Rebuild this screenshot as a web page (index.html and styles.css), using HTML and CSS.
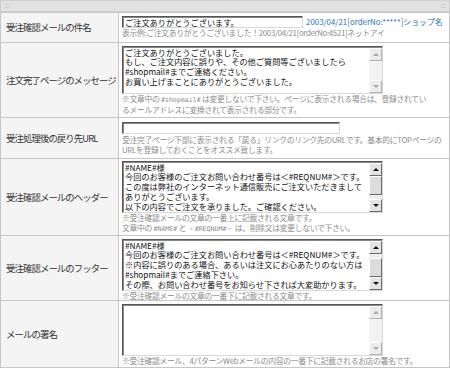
FILE: index.html
```html
<!DOCTYPE html>
<html lang="ja">
<head>
  <meta charset="UTF-8" />
  <title>受注メール設定</title>
  <link rel="stylesheet" href="styles.css">
</head>
<body>
  <div class="titlebar"><span>::</span><span>::</span></div>

  <table class="form">
    <tr class="r1">
      <th>受注確認メールの件名</th>
      <td>
        <div class="line">
          <input class="field subject" type="text" value="ご注文ありがとうございます。">
          <span class="sample">2003/04/21[orderNo:*****]ショップ名</span>
        </div>
        <p class="note">表示例:ご注文ありがとうございました！2003/04/21[orderNo:4521]ネットアイ</p>
      </td>
    </tr>
    <tr class="r2">
      <th>注文完了ページのメッセージ</th>
      <td>
        <div class="box">
          <textarea class="h4">ご注文ありがとうございました。
もし、ご注文内容に誤りや、その他ご質問等ございましたら
#shopmail#までご連絡ください。
お買い上げまことにありがとうございました。</textarea>
          <div class="scroll off"><span class="btn up"></span><span class="track"></span><span class="btn down"></span></div>
        </div>
        <p class="note">※文章中の <span class="code">#shopmail#</span> は変更しないで下さい。ページに表示される場合は、登録されてい<br>るメールアドレスに変換されて表示される部分です。</p>
      </td>
    </tr>
    <tr class="r3">
      <th>受注処理後の戻り先URL</th>
      <td>
        <div class="line">
          <input class="field url" type="text" value="">
        </div>
        <p class="note">受注完了ページ下部に表示される「戻る」リンクのリンク先のURLです。基本的にTOPページの<br>URLを登録しておくことをオススメ致します。</p>
      </td>
    </tr>
    <tr class="r4">
      <th>受注確認メールのヘッダー</th>
      <td>
        <div class="box">
          <textarea class="h5">#NAME#様
今回のお客様のご注文お問い合わせ番号は＜#REQNUM#＞です。
この度は弊社のインターネット通信販売にご注文いただきまして
ありがとうございます。
以下の内容でご注文を承りました。ご確認ください。</textarea>
          <div class="scroll"><span class="btn up"></span><span class="track"><span class="thumb"></span></span><span class="btn down"></span></div>
        </div>
        <p class="note">※受注確認メールの文章の一番上に記載される文章です。<br>文章中の <span class="code">#NAME#</span> と <span class="code">＜#REQNUM#＞</span> は、削除又は変更しないで下さい。</p>
      </td>
    </tr>
    <tr class="r5">
      <th>受注確認メールのフッター</th>
      <td>
        <div class="box">
          <textarea class="h5">#NAME#様
今回のお客様のご注文お問い合わせ番号は＜#REQNUM#＞です。
※内容に誤りのある場合、あるいは注文にお心あたりのない方は
#shopmail#までご連絡下さい。
その際、お問い合わせ番号をお知らせ下されば大変助かります。
以上、よろしくお願いいたします。</textarea>
          <div class="scroll"><span class="btn up"></span><span class="track"><span class="thumb low"></span></span><span class="btn down"></span></div>
        </div>
        <p class="note">※受注確認メールの文章の一番下に記載される文章です。</p>
      </td>
    </tr>
    <tr class="r6">
      <th>メールの署名</th>
      <td>
        <div class="box">
          <textarea class="h5"></textarea>
          <div class="scroll off"><span class="btn up"></span><span class="track"></span><span class="btn down"></span></div>
        </div>
        <p class="note">※受注確認メール、4パターンWebメールの内容の一番下に記載されるお店の署名です。</p>
      </td>
    </tr>
  </table>
</body>
</html>
```

FILE: styles.css
```css
body {
  margin: 0;
  background: #fff;
  font-family: "Noto Sans CJK JP", sans-serif;
  color: #333;
}

.titlebar {
  height: 10px;
  width: 440px;
  display: flex;
  justify-content: space-between;
  padding: 0 4px;
  background-color: #eaeaea;
  background-image: radial-gradient(#d6d6d6 0.6px, transparent 0.8px);
  background-size: 2px 2px;
  border: 1px solid #cfcfcf;
  font-size: 7px;
  line-height: 9px;
  color: #aaa;
}

.form {
  width: 450px;
  table-layout: fixed;
  border-spacing: 1px;
  background: #c6c6c6;
}
.form th {
  width: 112px;
  padding: 0 0 0 5px;
  background: #f4f4f4;
  font-weight: normal;
  text-align: left;
  font-size: 9.4px;
  letter-spacing: -0.9px;
  white-space: nowrap;
  color: #333;
}
.form td {
  background: #fff;
  padding: 3px 3px 1px 3px;
  vertical-align: top;
}
.r1 td { padding: 2px 3px 3px 3px; }
.r3 td { padding: 4px 3px 2px 3px; }
.r4 td { padding: 2px 3px 0 3px; }
.r5 td { padding: 3px 3px 0 3px; }
.r5 .note { line-height: 9px; }
.r6 td { padding: 3px 3px 1px 3px; }

.line {
  display: flex;
  align-items: center;
  gap: 3px;
  height: 13px;
}
.field {
  box-sizing: border-box;
  height: 12px;
  margin: 0;
  padding: 0 2px;
  border: 1px solid;
  border-color: #555 #d8d8d8 #d8d8d8 #555;
  box-shadow: inset 1px 1px 0 #888;
  font-family: "Noto Sans CJK JP", sans-serif;
  font-size: 8.2px;
  color: #111;
  outline: none;
}
.subject { width: 181px; }
.url { width: 218px; }

.sample {
  font-size: 7.9px;
  color: #2a72b8;
  white-space: nowrap;
}

.note {
  margin: 0;
  font-size: 7.8px;
  letter-spacing: -0.3px;
  line-height: 10.5px;
  color: #8c8c8c;
  white-space: nowrap;
}
.code {
  font-family: "DejaVu Sans Mono", monospace;
  font-size: 6.6px;
  letter-spacing: 0;
}

.box {
  display: flex;
  width: 261px;
  box-sizing: border-box;
  border: 1px solid;
  border-color: #555 #d8d8d8 #d8d8d8 #555;
  box-shadow: inset 1px 1px 0 #888;
  padding: 1px 0 0 1px;
}
.box textarea {
  flex: 1;
  margin: 0;
  padding: 0 1px;
  border: none;
  resize: none;
  overflow: hidden;
  font-family: "Noto Sans CJK JP", sans-serif;
  font-size: 8.2px;
  line-height: 9.8px;
  color: #111;
  white-space: pre;
  outline: none;
}
.h4 { height: 45px; }
.h5 { height: 49px; }

.scroll {
  width: 13px;
  display: flex;
  flex-direction: column;
  background: #eeeeee;
}
.btn {
  box-sizing: border-box;
  height: 13px;
  background: #e4e4e4;
  border: 1px solid;
  border-color: #fff #6a6a6a #6a6a6a #fff;
  display: flex;
  align-items: center;
  justify-content: center;
}
.btn::after {
  content: "";
  border-left: 3px solid transparent;
  border-right: 3px solid transparent;
}
.up::after { border-bottom: 3px solid #111; }
.down::after { border-top: 3px solid #111; }
.track {
  flex: 1;
  display: flex;
  flex-direction: column;
}
.thumb {
  box-sizing: border-box;
  height: 19px;
  background: #dcdcdc;
  border: 1px solid;
  border-color: #fff #6a6a6a #6a6a6a #fff;
}
.thumb.low { margin-top: auto; }

.off { background: #f2f2f2; }
.off .btn {
  background: #ececec;
  border-color: #fff #b0b0b0 #b0b0b0 #fff;
}
.off .up::after { border-bottom-color: #a8a8a8; }
.off .down::after { border-top-color: #a8a8a8; }
```
